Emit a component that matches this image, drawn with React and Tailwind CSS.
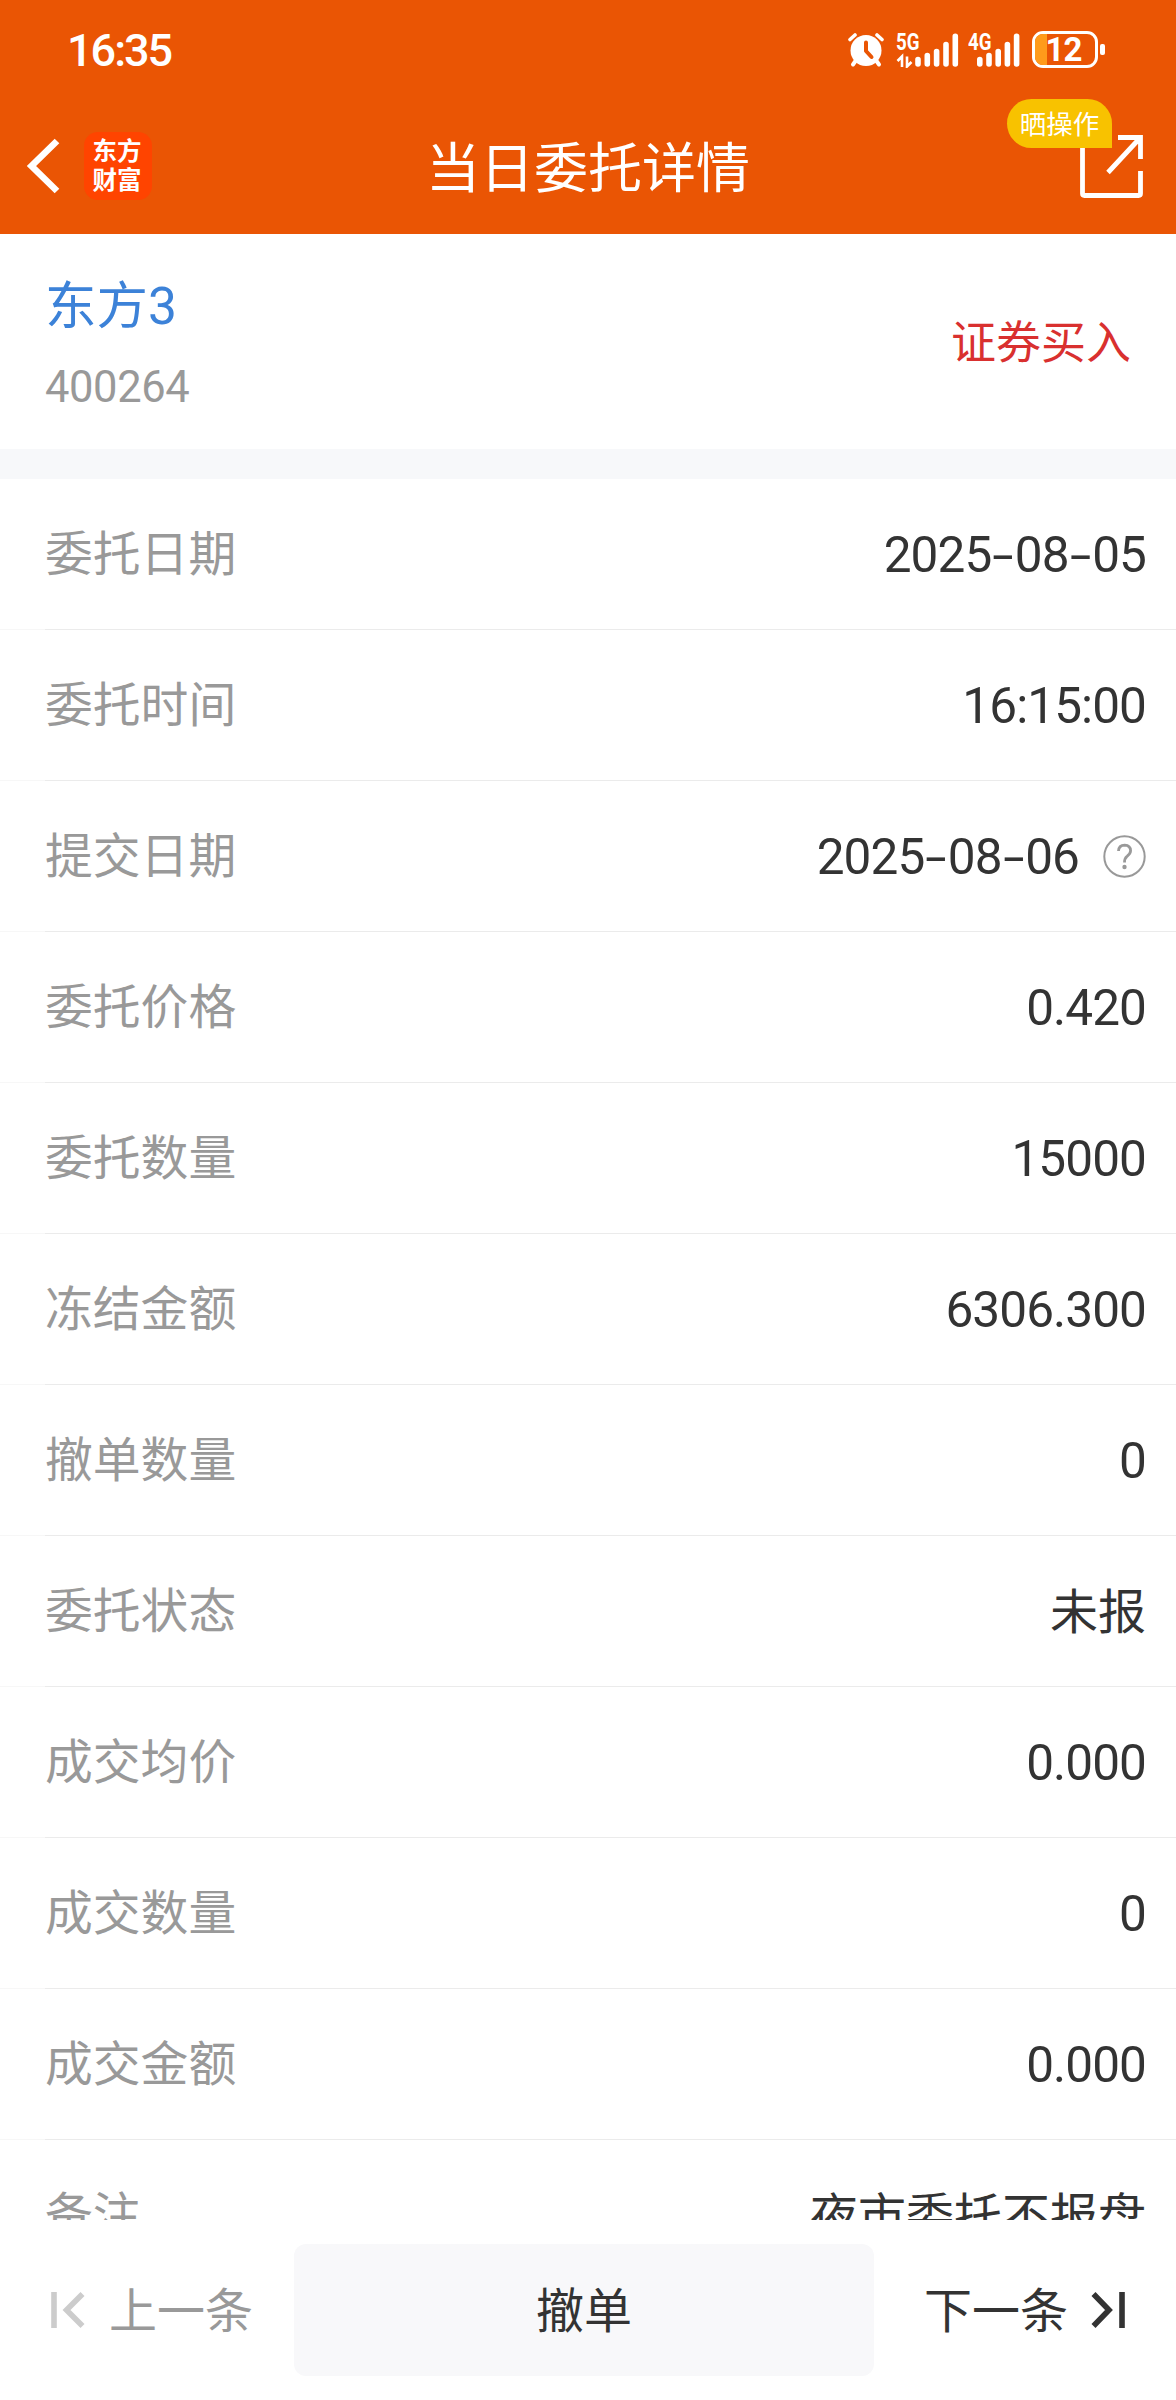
const rows = [
  { label: "委托日期", value: "2025-08-05" },
  { label: "委托时间", value: "16:15:00" },
  { label: "提交日期", value: "2025-08-06", help: true },
  { label: "委托价格", value: "0.420" },
  { label: "委托数量", value: "15000" },
  { label: "冻结金额", value: "6306.300" },
  { label: "撤单数量", value: "0" },
  { label: "委托状态", value: "未报" },
  { label: "成交均价", value: "0.000" },
  { label: "成交数量", value: "0" },
  { label: "成交金额", value: "0.000" },
  { label: "备注", value: "夜市委托不报盘" },
];

function AlarmIcon() {
  return (
    <svg className="h-[36px] w-[36px]" viewBox="0 0 36 36" fill="none" stroke="#fff" strokeLinecap="round">
      <circle cx="18" cy="18.5" r="15.5" fill="#fff" stroke="none" />
      <path d="M2 7.5 7 3M34 7.5 29 3" strokeWidth="3.6" />
      <path d="M7.5 29 5 32.5M28.500 29 31 32.5" strokeWidth="4" />
      <path d="M18 10.500V19L23.500 25" stroke="#ea5504" strokeWidth="4" strokeLinejoin="round" />
    </svg>
  );
}

function Signal({ label, arrows }) {
  return (
    <div className="relative h-[36px] w-[64px]">
      <span className="absolute left-0 top-0 origin-left scale-x-[0.78] font-[Roboto] text-[24px] font-bold leading-[20px] text-white">
        {label}
      </span>
      <svg className="absolute left-0 top-0 h-[36px] w-[64px]" viewBox="0 0 64 36" fill="none" stroke="#fff" strokeWidth="5.6" strokeLinecap="round">
        {arrows ? (
          <>
            <path d="M22 27.500V32M31.300 23.500V32M40.600 19.500V32M50 12.500V32M59.300 4.300V32" />
            <path d="M6 35V24.500L1.500 29M11 24.500V34.500L15.500 30" strokeWidth="2.6" strokeLinecap="butt" />
          </>
        ) : (
          <path d="M11.800 27.500V32M21 23.500V32M30.200 19.500V32M39.400 12.500V32M48.600 4.300V32" />
        )}
      </svg>
    </div>
  );
}

function Battery() {
  return (
    <div className="flex items-center gap-[2px]">
      <div className="relative flex h-[37px] w-[66px] items-center justify-center overflow-hidden rounded-[11px] border-[3px] border-white">
        <div className="absolute inset-y-0 left-0 w-[12px] bg-[#ff9b1b]" />
        <span className="relative mr-[3px] font-[Roboto] text-[33px] font-bold leading-[33px] tracking-[-1px] text-white">12</span>
      </div>
      <div className="h-[11px] w-[5px] rounded-[2px] bg-white" />
    </div>
  );
}

function ShareIcon() {
  return (
    <svg className="h-[64px] w-[64px]" viewBox="0 0 64 64" fill="none" stroke="#fff" strokeWidth="4.800">
      <path d="M2.500 10V58.500Q2.500 60.500 4.500 60.500H58.500Q60.500 60.500 60.500 58.500V36" />
      <path d="M38 2.500H60.500V24M60 3 28 37.500" />
    </svg>
  );
}

function HelpIcon() {
  return (
    <svg className="ml-[24px] h-[43px] w-[43px]" viewBox="0 0 43 43" fill="none" stroke="#999">
      <circle cx="21.500" cy="21.500" r="20.200" strokeWidth="2" />
      <path d="M15.500 16Q15.800 10.300 21.700 10.200Q27.500 10.500 27.600 15.700Q27.500 18.500 24 21.300Q21.500 23.200 21.500 27.500" strokeWidth="2.800" />
      <circle cx="21.500" cy="32" r="2.200" fill="#999" stroke="none" />
    </svg>
  );
}

function Value({ text }) {
  const parts = text.split("-");
  return (
    <span className="whitespace-nowrap pt-[3px] text-[48px] text-[#333]">
      {parts.map((part, i) => (
        <span key={i}>
          {i > 0 && (
            <span className="inline-block w-[23.500px] origin-center scale-x-[1.600] text-center">-</span>
          )}
          <span className={/\d/.test(part) ? "text-[49.500px] tracking-[-0.900px]" : "text-[48px]"}>{part}</span>
        </span>
      ))}
    </span>
  );
}

export default function App() {
  return (
    <div className="flex h-[2400px] w-[1176px] flex-col overflow-hidden bg-white font-[Roboto,'Noto_Sans_CJK_SC',sans-serif]">
      <header className="h-[234px] shrink-0 bg-[#ea5504]">
        <div className="flex h-[99px] items-center justify-between pl-[67px] pr-[71px]">
          <span className="pt-[2px] font-[Roboto] text-[45px] font-medium leading-[46px] tracking-[-2px] text-white">16:35</span>
          <div className="flex items-center">
            <AlarmIcon />
            <div className="ml-[11.500px]"><Signal label="5G" arrows /></div>
            <div className="ml-[8.500px]"><Signal label="4G" /></div>
            <Battery />
          </div>
        </div>
        <div className="flex h-[135px] justify-between">
          <div className="flex w-[200px] pl-[26px] pt-[33px]">
            <svg className="mt-[6px] h-[56px] w-[34px]" viewBox="0 0 34 56" fill="none" stroke="#fff" strokeWidth="6.600">
              <path d="M31 3 5.500 28 31 53" />
            </svg>
            <div className="ml-[23.500px] flex h-[68px] w-[68px] flex-col items-center justify-center rounded-[14px] bg-[#ff4400] pr-[1px] text-[24.500px] font-bold leading-[29px] text-white">
              <span>东方</span>
              <span>财富</span>
            </div>
          </div>
          <h1 className="pt-[37px] text-[54px] font-normal leading-[68px] text-white">当日委托详情</h1>
          <div className="relative w-[200px]">
            <div className="ml-[104px] mt-[36px]"><ShareIcon /></div>
            <span className="absolute left-[31px] top-0 flex h-[49px] w-[105px] items-center justify-center rounded-[24.500px] rounded-br-none bg-[#f8c200] pt-[2px] text-[26.500px] leading-[47px] text-white">
              晒操作
            </span>
          </div>
        </div>
      </header>

      <section className="flex h-[215px] shrink-0 items-center justify-between px-[45px]">
        <div className="flex flex-col pt-[11px]">
          <span className="text-[51.500px] leading-[82px] text-[#3c82d8]">东方3</span>
          <span className="text-[43.500px] leading-[80px] tracking-[-0.400px] text-[#999]">400264</span>
        </div>
        <span className="pt-[4px] text-[45px] text-[#d9302f]">证券买入</span>
      </section>

      <div className="h-[30px] shrink-0 bg-[#f7f8fa]" />

      <main className="h-[1741px] shrink-0 overflow-hidden">
        {rows.map((row) => (
          <div key={row.label}>
            <div className="flex h-[150px] items-center justify-between pl-[45px] pr-[30px]">
              <span className="pt-[3px] text-[47.800px] text-[#999]">{row.label}</span>
              <div className="flex items-center">
                <Value text={row.value} />
                {row.help && <HelpIcon />}
              </div>
            </div>
            <div className="flex h-px">
              <div className="w-[45px] bg-[#f7f7f7]" />
              <div className="flex-1 bg-[#ebebeb]" />
            </div>
          </div>
        ))}
      </main>

      <footer className="flex h-[180px] shrink-0 items-start bg-white pt-[24px] text-[48px]">
        <button className="flex h-[132px] w-[294px] items-center pl-[51px] text-[#999]">
          <svg className="h-[36px] w-[34px]" viewBox="0 0 34 36" fill="none" stroke="#ccc" strokeWidth="5.600">
            <path d="M3 0V36M31.500 2 15.500 18 31.500 34" />
          </svg>
          <span className="ml-[24px] pt-[3px]">上一条</span>
        </button>
        <button className="h-[132px] w-[580px] rounded-[12px] bg-[#f8f8fa] pt-[3px] text-[#333]">撤单</button>
        <button className="flex h-[132px] flex-1 items-center justify-end pr-[51px] text-[#333]">
          <span className="mr-[23px] pt-[3px]">下一条</span>
          <svg className="h-[36px] w-[34px]" viewBox="0 0 34 36" fill="none" stroke="#333" strokeWidth="5.600">
            <path d="M31 0V36M2.500 2 18 18 2.500 34" />
          </svg>
        </button>
      </footer>
    </div>
  );
}
